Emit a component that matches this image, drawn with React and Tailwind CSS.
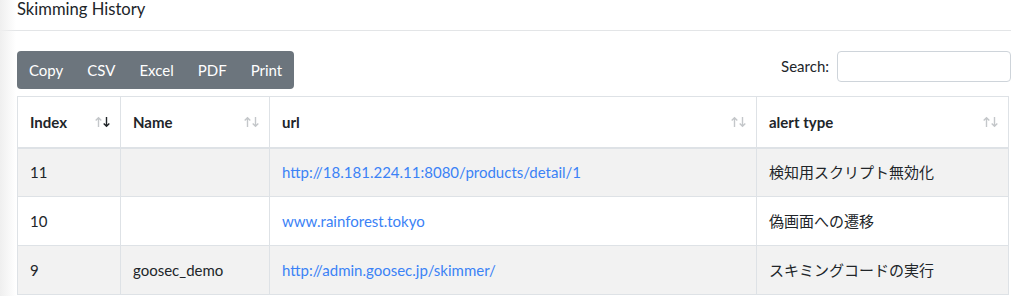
import React from "react";

const font = { fontFamily: '"Lato", "Noto Sans CJK JP", sans-serif' };

function SortIcon({ active }) {
  return (
    <span className="absolute right-[10px] top-1/2 -translate-y-1/2 flex items-center gap-[1px]">
      <svg width="7" height="11" viewBox="0 0 7 11" className="block">
        <path d="M3.5 10.5V1.2M0.7 4L3.5 1.2 6.3 4" fill="none" stroke="#c4c7ca" strokeWidth="1.4" />
      </svg>
      <svg width="7" height="11" viewBox="0 0 7 11" className="block">
        <path d="M3.5 0.5V9.8M0.7 7L3.5 9.8 6.3 7" fill="none" stroke={active ? "#212529" : "#c4c7ca"} strokeWidth="1.4" />
      </svg>
    </span>
  );
}

const rows = [
  { index: "11", name: "", url: "http://18.181.224.11:8080/products/detail/1", alert: "検知用スクリプト無効化" },
  { index: "10", name: "", url: "www.rainforest.tokyo", alert: "偽画面への遷移" },
  { index: "9", name: "goosec_demo", url: "http://admin.goosec.jp/skimmer/", alert: "スキミングコードの実行" },
];

export default function App() {
  return (
    <div className="relative w-[1011px] h-[296px] overflow-hidden bg-white text-[#212529]" style={font}>
      <div className="pointer-events-none absolute left-0 top-0 h-full w-[16px] bg-gradient-to-r from-[#efefef] to-white/0" />
      <div className="flex h-[31px] items-end border-b border-[#e3e5e7] pb-[12px] pl-[17px]">
        <div className="whitespace-nowrap text-[16.6px] leading-[17px]">Skimming History</div>
      </div>
      <div className="pl-[17px] pt-[20px]">
        <div className="flex items-start justify-between">
          <div className="flex rounded-[4px] bg-[#6c757d] text-white text-[15px] leading-[24px]">
            {["Copy", "CSV", "Excel", "PDF", "Print"].map((b) => (
              <div key={b} className="px-[12px] py-[7px]">{b}</div>
            ))}
          </div>
          <div className="flex items-center gap-[8px] text-[15px]">
            <span>Search:</span>
            <div className="h-[31px] w-[174px] rounded-[4px] border border-[#ced4da] bg-white" />
          </div>
        </div>
        <table className="mt-[7px] w-[992px] border-collapse border border-[#dee2e6] text-[15px]">
          <thead>
            <tr>
              {[
                ["Index", "w-[103px]", true],
                ["Name", "w-[149px]", false],
                ["url", "w-[487px]", false],
                ["alert type", "", false],
              ].map(([h, w, a]) => (
                <th key={h} className={`relative ${w} h-[51px] border border-b-2 border-[#dee2e6] px-[12px] text-left font-bold leading-[24px]`}>
                  {h}
                  <SortIcon active={a} />
                </th>
              ))}
            </tr>
          </thead>
          <tbody>
            {rows.map((r, i) => (
              <tr key={r.index} className={i % 2 === 0 ? "bg-[#f2f2f2]" : "bg-white"}>
                <td className="h-[49px] border border-[#dee2e6] px-[12px] leading-[24px]">{r.index}</td>
                <td className="border border-[#dee2e6] px-[12px] leading-[24px]">{r.name}</td>
                <td className="border border-[#dee2e6] px-[12px] leading-[24px] text-[#3b82f6]">{r.url}</td>
                <td className="border border-[#dee2e6] px-[12px] leading-[24px]">{r.alert}</td>
              </tr>
            ))}
          </tbody>
        </table>
      </div>
    </div>
  );
}
